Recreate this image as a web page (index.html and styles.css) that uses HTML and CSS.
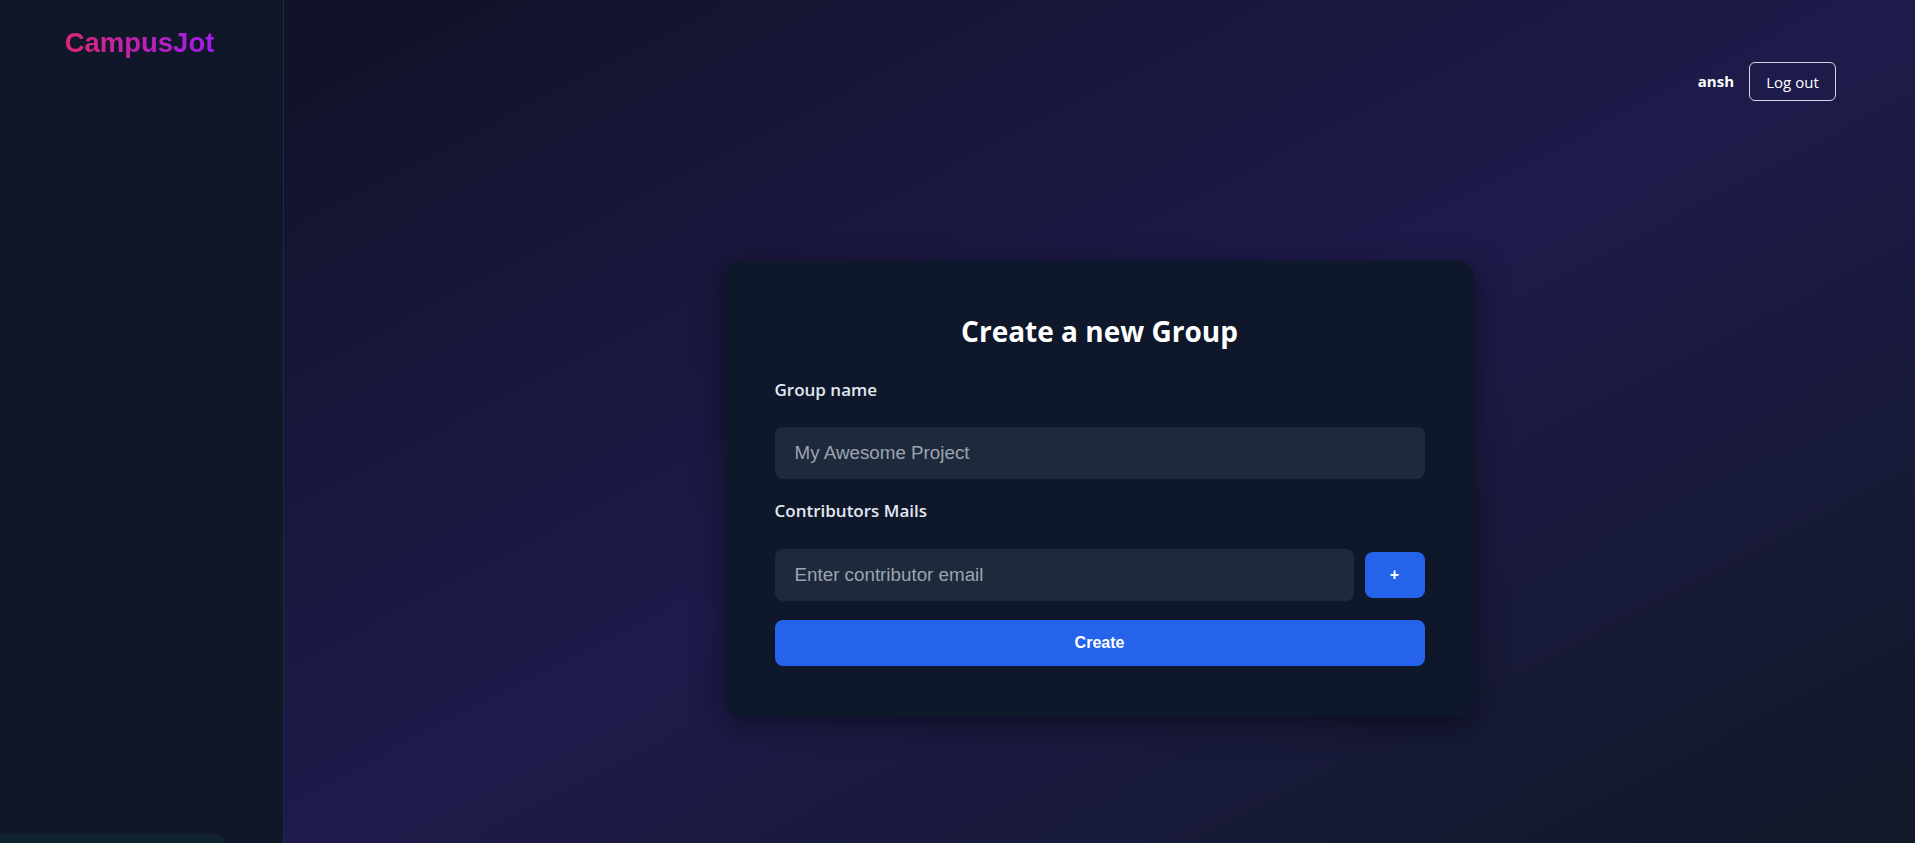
FILE: index.html
```html
<!DOCTYPE html>
<html lang="en">
<head>
<meta charset="utf-8">
<title>CampusJot</title>
<link rel="stylesheet" href="styles.css">
</head>
<body>
<div class="app">
  <aside class="sidebar">
    <div class="logo">CampusJot</div>
  </aside>
  <main class="main">
    <header class="topbar">
      <span class="user">ansh</span>
      <button class="logout" type="button">Log out</button>
    </header>
    <section class="stage">
      <form class="card">
        <h1 class="title">Create a new Group</h1>
        <label class="label label-first" for="gname">Group name</label>
        <input id="gname" class="field" type="text" placeholder="My Awesome Project">
        <label class="label label-second" for="gmail">Contributors Mails</label>
        <div class="row">
          <input id="gmail" class="field field-grow" type="email" placeholder="Enter contributor email">
          <button class="add" type="button">+</button>
        </div>
        <button class="create" type="button">Create</button>
      </form>
    </section>
  </main>
</div>
<div class="status"><span class="status-text">localhost:3000/groups/create-new-group</span></div>
</body>
</html>
```

FILE: styles.css
```css
* { box-sizing: border-box; }

html, body {
  margin: 0;
  padding: 0;
  height: 100%;
}

body {
  font-family: "Open Sans", "Noto Sans", sans-serif;
  color: #ffffff;
  background: #0f172a;
  overflow: hidden;
}

.app {
  display: flex;
  height: 843px;
}

.sidebar {
  width: 284px;
  flex: 0 0 284px;
  background: #0f1729;
  border-right: 1px solid #222b3d;
  display: flex;
  flex-direction: column;
  align-items: center;
  padding-top: 26px;
}

.logo {
  display: inline-block;
  font-family: "Liberation Sans", Arial, sans-serif;
  font-weight: 700;
  font-size: 27.5px;
  line-height: 1.2;
  background: linear-gradient(90deg, #db2777, #a21cf0);
  -webkit-background-clip: text;
  background-clip: text;
  color: transparent;
  margin-left: -4px;
}

.main {
  flex: 1;
  display: flex;
  flex-direction: column;
  background: linear-gradient(to bottom right, #111128 0%, #1e1b4b 50%, #111827 100%);
}

.topbar {
  display: flex;
  justify-content: flex-end;
  align-items: flex-start;
  height: 134px;
  padding: 62px 79px 33px 0;
}

.user {
  font-weight: 700;
  font-size: 15px;
  line-height: 39px;
  margin-right: 15px;
}

.logout {
  height: 39px;
  width: 87px;
  padding: 0;
  background: transparent;
  color: #ffffff;
  border: 1px solid #d4d4dc;
  border-radius: 6px;
  font-family: "Open Sans", "Noto Sans", sans-serif;
  font-size: 15px;
}

.stage {
  flex: 1;
  display: flex;
  align-items: center;
  justify-content: center;
}

.card {
  width: 750px;
  background: #0f172a;
  border-radius: 18px;
  padding: 50px;
  display: flex;
  flex-direction: column;
  box-shadow: 0 8px 30px rgba(5, 5, 15, 0.55);
}

.title {
  margin: 0;
  text-align: center;
  font-size: 28px;
  font-weight: 700;
  line-height: 40px;
  color: #ffffff;
}

.label {
  display: block;
  font-size: 17px;
  font-weight: 600;
  line-height: 24px;
  color: #e2e8f0;
}

.label-first { margin-top: 27px; }
.label-second { margin-top: 20px; }

.field {
  height: 52px;
  width: 100%;
  margin-top: 25px;
  background: #1e293b;
  border: none;
  border-radius: 8px;
  padding: 0 20px;
  font-family: "Liberation Sans", Arial, sans-serif;
  font-size: 18.8px;
  color: #e5e7eb;
  outline: none;
}

.field::placeholder {
  color: #9ca3af;
}

.row {
  display: flex;
  align-items: center;
  gap: 11px;
  margin-top: 26px;
}

.row .field {
  margin-top: 0;
}

.field-grow {
  flex: 1;
  width: auto;
}

.add {
  width: 60px;
  height: 46px;
  flex: 0 0 60px;
  background: #2563eb;
  border: none;
  border-radius: 8px;
  color: #ffffff;
  font-family: "Liberation Sans", Arial, sans-serif;
  font-weight: 700;
  font-size: 16px;
  padding: 0;
}

.create {
  margin-top: 19px;
  height: 46px;
  width: 100%;
  background: #2563eb;
  border: none;
  border-radius: 8px;
  color: #ffffff;
  font-family: "Liberation Sans", Arial, sans-serif;
  font-weight: 700;
  font-size: 16px;
}

.status {
  position: fixed;
  left: 0;
  bottom: 0;
  width: 224px;
  height: 9px;
  overflow: hidden;
  background: #0f222d;
  border-top-right-radius: 8px;
  padding: 8px 0 0 2px;
}

.status-text {
  display: block;
  font-family: "Liberation Sans", Arial, sans-serif;
  font-size: 12px;
  line-height: 14px;
  color: #dfe6ee;
  white-space: nowrap;
}
```
